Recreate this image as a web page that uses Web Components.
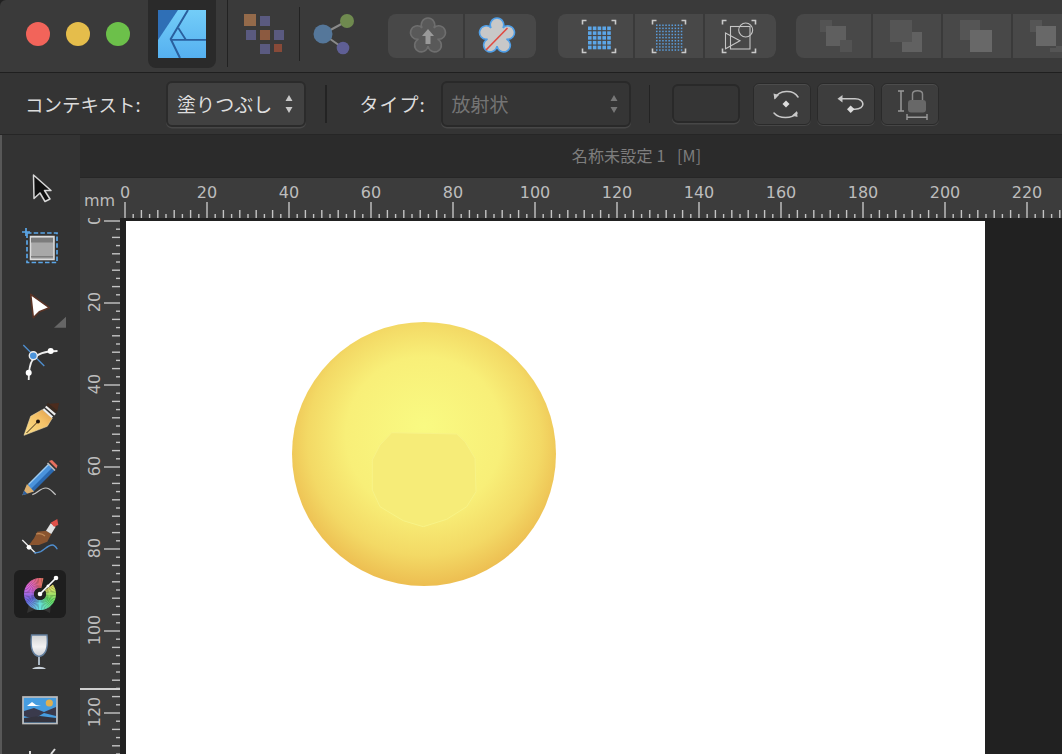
<!DOCTYPE html>
<html lang="ja">
<head>
<meta charset="utf-8">
<title>Affinity</title>
<style>
  html, body { margin: 0; padding: 0; background: #212121; overflow: hidden; }
  body { font-family: "Noto Sans CJK JP", "Liberation Sans", sans-serif; }
</style>
</head>
<body>
<app-window></app-window>
<script>
// every icon uses page coordinates in its viewBox, so it is easy to compare with the screenshot
const svg = (x, y, w, h, body) =>
  `<svg width="${w}" height="${h}" viewBox="${x} ${y} ${w} ${h}" style="display:block;overflow:visible">${body}</svg>`;

function flowerPath(cx, cy, valley, lobe) {
  let d = "";
  for (let i = 0; i <= 5; i++) {
    const a = ((i * 72 - 54) * Math.PI) / 180;
    const px = cx + valley * Math.cos(a);
    const py = cy + valley * Math.sin(a);
    d += `${i ? "A" + lobe + " " + lobe + " 0 1 1 " : "M"}${px.toFixed(1)} ${py.toFixed(1)} `;
  }
  return d + "Z";
}

function corners(x1, y1, x2, y2) {
  const s = 4;
  return `<path fill="none" stroke="#c9c9c9" stroke-width="1.6" d="
    M${x1} ${y1 + s}V${y1}H${x1 + s} M${x2 - s} ${y1}H${x2}V${y1 + s}
    M${x2} ${y2 - s}V${y2}H${x2 - s} M${x1 + s} ${y2}H${x1}V${y2 - s}"/>`;
}

function dots(x, y, n, step, size, fill) {
  let out = "";
  for (let r = 0; r < n; r++)
    for (let c = 0; c < n; c++)
      out += `<rect x="${(x + c * step).toFixed(1)}" y="${(y + r * step).toFixed(1)}" width="${size}" height="${size}" fill="${fill}"/>`;
  return out;
}

function wheelSegments(cx, cy, ro, ri) {
  let out = "";
  for (let a = 54; a < 372; a += 6) {
    const p = (deg, r) => {
      const t = ((deg - 90) * Math.PI) / 180;
      return `${(cx + r * Math.cos(t)).toFixed(2)} ${(cy + r * Math.sin(t)).toFixed(2)}`;
    };
    out += `<path d="M${p(a, ri)}L${p(a, ro)}L${p(a + 6.4, ro)}L${p(a + 6.4, ri)}Z" fill="hsl(${(a + 2) % 360},66%,64%)"/>`;
  }
  return out;
}

const appIcon = `<svg width="48" height="48" viewBox="0 0 48 48" style="display:block">
  <defs><linearGradient id="ai" x1="0" y1="0" x2="0" y2="1"><stop offset="0" stop-color="#73cdf8"/><stop offset="1" stop-color="#55b0f0"/></linearGradient></defs>
  <rect width="48" height="48" fill="url(#ai)"/>
  <path d="M0 0H20L0 30Z" fill="#2f6fb6"/>
  <path d="M30 0L12.700 29L22 48" fill="none" stroke="#2a5f9e" stroke-width="2"/>
  <path d="M12.700 29.800H48M20.300 18L28 30" fill="none" stroke="#2a5f9e" stroke-width="1.800"/>
</svg>`;

const personaIcon = svg(244, 14, 41, 41, `
  <rect x="244" y="14" width="12" height="12" fill="#946a4a"/>
  <rect x="260" y="16" width="10" height="10" fill="#5a5a80"/>
  <rect x="246" y="30" width="10" height="10" fill="#5a5a80"/>
  <rect x="260" y="30" width="10" height="10" fill="#8c5a40"/>
  <rect x="274" y="30" width="10" height="10" fill="#5a5a80"/>
  <rect x="260" y="44" width="10" height="10" fill="#5a5a80"/>
  <rect x="274" y="44" width="8" height="8" fill="#884a38"/>`);

const shareIcon = svg(313, 14, 42, 41, `
  <path d="M323 34L347 21M323 34L343 48" stroke="#8a8a8a" stroke-width="2"/>
  <circle cx="323" cy="34" r="9.500" fill="#55779a"/>
  <circle cx="347" cy="21" r="7" fill="#6f8a4f"/>
  <circle cx="343" cy="48" r="6.300" fill="#5f5f95"/>`);

const groupIcons = [
  [
    [75, svg(388, 14, 75, 44, `
      <path d="${flowerPath(428, 36, 10, 6.7)}" fill="#595959" stroke="#6e6e6e" stroke-width="1.6"/>
      <path d="M428 29L434 36H430.500V44H425.500V36H422Z" fill="#9a9a9a"/>`)],
    [71, svg(465, 14, 71, 44, `
      <path d="${flowerPath(497, 36, 10, 6.7)}" fill="#c8c8c8" stroke="#4f9fe8" stroke-width="1.6"/>
      <path d="M486 50L507.500 28" stroke="#e04a42" stroke-width="1.6"/>`)],
  ],
  [
    [75, svg(558, 14, 75, 44, corners(582.5, 20.5, 615.5, 52.5) + dots(588, 26.5, 5, 4.8, 3.6, "#5ba6e8"))],
    [68, svg(635, 14, 68, 44, corners(652.5, 20.5, 685.5, 52.5) + dots(656, 24.5, 9, 3.1, 1.5, "#5a9ddc"))],
    [71, svg(705, 14, 71, 44, corners(722.5, 20.5, 755.5, 52.5) + `
      <g fill="none" stroke="#c4c4c4" stroke-width="1.1">
        <rect x="730.500" y="26.500" width="19.500" height="22.500"/>
        <circle cx="745.700" cy="30" r="7"/>
        <path d="M725.500 33L740 40.700L725.500 48.700Z"/>
      </g>`)],
  ],
  [
    [75, svg(796, 14, 75, 44, `
      <rect x="820" y="20" width="12" height="12" fill="#535353"/>
      <rect x="826" y="26" width="20" height="20" fill="#5f5f5f"/>
      <rect x="840" y="40" width="12" height="12" fill="#535353"/>`)],
    [68, svg(873, 14, 68, 44, `
      <rect x="890" y="20" width="22" height="22" fill="#555"/>
      <path d="M912 32H922V52H902V42H912Z" fill="#616161"/>`)],
    [68, svg(943, 14, 68, 44, `
      <path d="M960 20H980V30H970V40H960Z" fill="#555"/>
      <rect x="970" y="30" width="22" height="22" fill="#686868"/>`)],
    [75, svg(1013, 14, 75, 44, `
      <path d="M1030 20H1042V26H1036V32H1030Z" fill="#555"/>
      <rect x="1036" y="26" width="20" height="20" fill="#686868"/>
      <path d="M1050 52V48H1056V46H1062V52Z" fill="#555"/>`)],
  ],
];

const ctxIcons = {
  reset: svg(753, 84, 58, 40, `
    <g fill="none" stroke="#c8c8c8" stroke-width="1.5" stroke-linecap="round">
      <path d="M775 98C779 90 793 89 798 97"/>
      <path d="M774 113C779 119 792 119 797 113"/>
    </g>
    <path d="M773.500 93.500L779 95L774.500 99.500Z M797.500 117L792 115.500L797 111Z" fill="#c8c8c8"/>
    <path d="M786 100.500L789.500 104L786 107.500L782.500 104Z" fill="#dcdcdc"/>`),
  loop: svg(817, 84, 58, 40, `
    <path d="M841 98.700H855C865.500 98.700 865.500 109.300 855 109.300H851" fill="none" stroke="#c8c8c8" stroke-width="1.6"/>
    <path d="M837.500 98.700L842.500 95V102.500Z" fill="#c8c8c8"/>
    <path d="M850.700 105.500L854.500 109.300L850.700 113L847 109.300Z" fill="#dcdcdc"/>`),
  lock: svg(881, 84, 58, 40, `
    <path d="M898 91H904M898 111H904M901 91V111" fill="none" stroke="#9a9a9a" stroke-width="1.5"/>
    <path d="M912.500 101V94C912.500 89.500 922.500 89.500 922.500 94V101" fill="none" stroke="#8a8a8a" stroke-width="1.5"/>
    <rect x="908" y="100" width="18" height="12.500" rx="3" fill="#686868"/>
    <path d="M907 114V120M927 114V120M907 117.300H927" fill="none" stroke="#9a9a9a" stroke-width="1.4"/>`),
};

const railIcons = [
  svg(0, 159, 80, 58, `
    <path d="M33.500 175L51 190.500H44.500L50 199L45 201.500L40 193L34 198.500Z" fill="#111" stroke="#d8d8d8" stroke-width="1.5" stroke-linejoin="round"/>`),
  svg(0, 217, 80, 58, `
    <rect x="27" y="233" width="30" height="29.500" fill="none" stroke="#5ba6e8" stroke-width="1.7" stroke-dasharray="4.500 2.200"/>
    <path d="M26 228V236M22 232H30" stroke="#5ba6e8" stroke-width="1.7"/>
    <rect x="30.500" y="236.500" width="23.500" height="23" fill="#a8a8a8" stroke="#dcdcdc" stroke-width="1.500"/>
    <rect x="31" y="238" width="22" height="4.500" fill="#7c7c7c"/>
    <rect x="31" y="256" width="22" height="1.500" fill="#7c7c7c"/>`),
  svg(0, 275, 80, 58, `
    <path d="M30.700 294.300L49.300 307.700L39.300 311.700L33.300 317.700Z" fill="#fff" stroke="#5a3325" stroke-width="1.600" stroke-linejoin="round"/>
    <path d="M66 316.700V327.700H54Z" fill="#666"/>`),
  svg(0, 333, 80, 58, `
    <path d="M23.300 345L44.300 366" stroke="#4f8fd0" stroke-width="1.300"/>
    <path d="M28.700 380C28.700 364 30 351 57.500 351" fill="none" stroke="#eee" stroke-width="1.800"/>
    <circle cx="33.300" cy="355.700" r="4" fill="#4b94dc" stroke="#eee" stroke-width="1.400"/>
    <circle cx="50.700" cy="351" r="3" fill="#fff"/>
    <circle cx="28.700" cy="372.700" r="3" fill="#fff"/>`),
  svg(0, 391, 80, 58, `
    <defs><linearGradient id="nib" x1="0" y1="1" x2="1" y2="0"><stop offset="0" stop-color="#fbe08a"/><stop offset=".6" stop-color="#f5c268"/><stop offset="1" stop-color="#dd9a48"/></linearGradient></defs>
    <path d="M24 435.300L30.700 416.300L42.300 409.700L52.300 418L47.300 426.300Z" fill="url(#nib)" stroke="#f3dca8" stroke-width=".6"/>
    <path d="M26.500 433L38 421.500" stroke="#3c2a18" stroke-width="1"/>
    <circle cx="38" cy="421.500" r="2" fill="#221610"/>
    <path d="M47.300 404L59 403L57.300 411.300Z" fill="#4c2c1e"/>
    <path d="M47 404L56.500 412" stroke="#3a2a20" stroke-width="3"/>
    <path d="M43.300 409L52.300 417.300" stroke="#eee" stroke-width="2.200"/>
    <path d="M45.700 406.500L55.200 414.700" stroke="#eee" stroke-width="2.200"/>`),
  svg(0, 449, 80, 58, `
    <path d="M30 489L52 467" stroke="#2b69b0" stroke-width="8.500"/>
    <path d="M29 487.500L50.500 466" stroke="#4a93dc" stroke-width="5"/>
    <path d="M28.500 484.500L49 464" stroke="#9ccbf2" stroke-width="1.500"/>
    <path d="M22.300 495.300L27 484L34 491.500Z" fill="#dcb070"/>
    <path d="M22.300 495.300L24 490.500L27.500 494Z" fill="#2d5f9e"/>
    <path d="M49 461L52 460L57.500 465.500L56.500 468.500Z" fill="#e8705e"/>
    <path d="M47.500 463L55 470.500" stroke="#bbb" stroke-width="1.600"/>
    <path d="M32.300 494.700C37 494 40 488 45.700 488C50 488 52 491.500 55.700 494.700" fill="none" stroke="#c8c8c8" stroke-width="1.200"/>`),
  svg(0, 507, 80, 58, `
    <path d="M46 530.700L51.300 534L47.300 541.700L39 545L29 545L34 538.300L37.300 531.700Z" fill="#8a5530"/>
    <path d="M36 534C40 533 43 534 45 536" stroke="#c08a58" stroke-width="1.200" fill="none"/>
    <path d="M50.700 523.300L55.700 526.700L51.300 534L46 530.700Z" fill="#e2e2e2"/>
    <path d="M57.300 519L58.300 525L54 526.700L50.700 522.700Z" fill="#e0514a"/>
    <path d="M22.300 540L35.700 553.300" stroke="#eee" stroke-width="1.300"/>
    <circle cx="29" cy="547.300" r="2.400" fill="#fff"/>
    <path d="M34 552.700C37 553 39 552.500 40.700 551.700C45 549.500 48 545 52.300 545C54.500 545 56 547 57.300 549.300" fill="none" stroke="#4f8fd0" stroke-width="1.300"/>`),
  svg(0, 565, 80, 58, `
    <rect x="14" y="570" width="52" height="48" rx="6" fill="#1e1e1e"/>
    <path d="M27 613L29 604H51L50 613L44 610H34Z" fill="#333"/>
    ${wheelSegments(40, 594, 16, 6)}
    <circle cx="40" cy="594" r="6" fill="#222"/>
    <path d="M40 594L56 578" stroke="#fff" stroke-width="1.700"/>
    <circle cx="40" cy="594" r="2.300" fill="#fff"/>
    <circle cx="48" cy="586" r="1.500" fill="#fff"/>
    <circle cx="56" cy="578" r="2.300" fill="#fff"/>`),
  svg(0, 623, 80, 58, `
    <defs><linearGradient id="wine" x1="0" y1="0" x2="0" y2="1"><stop offset="0" stop-color="#d0d2d4"/><stop offset=".55" stop-color="#f2f2f2"/><stop offset="1" stop-color="#c8ccd2"/></linearGradient></defs>
    <path d="M31.500 635H47C48 644 47.500 655 39 656.500C31 655 30.500 644 31.500 635Z" fill="url(#wine)" stroke="#64809f" stroke-width="1.400"/>
    <path d="M39 657V665" stroke="#a8b4c0" stroke-width="2"/>
    <path d="M32 669C35 666 43 666 46 669Z" fill="#c8d0d8"/>`),
  svg(0, 681, 80, 58, `
    <rect x="23" y="697" width="34" height="26.500" fill="#469de0" stroke="#bdbdbd" stroke-width="1.700"/>
    <path d="M27 706L32 702L36 705L41 706Z" fill="#fff"/>
    <circle cx="49.300" cy="703" r="3.600" fill="#e0b050"/>
    <path d="M24 711L34 708L44 712L56 707V716L44 713L34 719L24 716Z" fill="#3a3a4c"/>
    <path d="M24 718L40 716L56 718V722.500H24Z" fill="#34343f"/>`),
  svg(0, 739, 80, 58, `
    <path d="M30 751V754M55 749L51 754" stroke="#ddd" stroke-width="2"/>`),
];

class TrafficLights extends HTMLElement {
  constructor() {
    super();
    this.attachShadow({ mode: "open" }).innerHTML = `
      <style>
        :host { display: flex; gap: 16px; margin-bottom: 4px; }
        i { width: 24px; height: 24px; border-radius: 50%; }
      </style>
      <i style="background:#f2645a"></i>
      <i style="background:#e5bd4b"></i>
      <i style="background:#6cc04a"></i>`;
  }
}

class ToolGroup extends HTMLElement {
  set buttons(list) {
    this.attachShadow({ mode: "open" }).innerHTML = `
      <style>
        :host { display: flex; gap: 2px; height: 44px; border-radius: 8px; overflow: hidden; flex: none; }
        div { background: #484848; height: 44px; flex: none; }
        div:first-child { border-radius: 8px 0 0 8px; }
        div:last-child { border-radius: 0 8px 8px 0; }
      </style>
      ${list.map(([w, icon]) => `<div style="width:${w}px">${icon}</div>`).join("")}`;
  }
}

class MainToolbar extends HTMLElement {
  constructor() {
    super();
    this.attachShadow({ mode: "open" }).innerHTML = `
      <style>
        :host {
          display: flex; align-items: center; height: 72px; flex: none; overflow: hidden;
          background: #3a3a3a; border-bottom: 1px solid #1f1f1f; padding-left: 26px;
          border-top-left-radius: 6px;
        }
        .tile {
          width: 48px; height: 48px; padding: 10px; margin-left: 18px; align-self: flex-start;
          background: #2a2a2a; border-radius: 0 0 8px 8px; flex: none;
        }
        .rule { flex: none; width: 1.5px; background: #222; }
        .r1 { height: 67px; margin: 0 0 5px 10.5px; }
        .r2 { height: 54px; margin: 0 0 5px 13.5px; }
        .persona { flex: none; margin: 0 0 3px 16px; }
        .share { flex: none; margin: 0 0 3px 13px; }
        .g1 { margin-left: 33px; }
        .g2 { margin-left: 22px; }
        .g3 { margin-left: 20px; }
      </style>
      <traffic-lights></traffic-lights>
      <div class="tile">${appIcon}</div>
      <div class="rule r1"></div>
      <div class="persona">${personaIcon}</div>
      <div class="rule r2"></div>
      <div class="share">${shareIcon}</div>
      <tool-group class="g1"></tool-group>
      <tool-group class="g2"></tool-group>
      <tool-group class="g3"></tool-group>`;
    this.shadowRoot.querySelectorAll("tool-group").forEach((g, i) => (g.buttons = groupIcons[i]));
  }
}

class SelectBox extends HTMLElement {
  constructor() {
    super();
    const off = this.hasAttribute("disabled");
    this.attachShadow({ mode: "open" }).innerHTML = `
      <style>
        :host {
          display: flex; align-items: center; justify-content: space-between; flex: none;
          box-sizing: border-box; height: 46px; padding: 0 9px 0 9px;
          border: 2px solid ${off ? "#292929" : "#2b2b2b"}; border-radius: 6px;
          background: ${off ? "#353535" : "#414141"};
          box-shadow: 0 1.5px 0 #474747;
          color: ${off ? "#747474" : "#dedede"}; font-size: 19px; white-space: nowrap;
        }
        svg { display: block; flex: none; }
      </style>
      <slot></slot>
      <svg width="12" height="24" viewBox="0 0 12 24">
        <path d="M6 3L9.500 9H2.500Z M6 21L9.500 15H2.500Z" fill="${off ? "#777" : "#c8c8c8"}"/>
      </svg>`;
  }
}

class CtxButton extends HTMLElement {
  constructor() {
    super();
    const icon = ctxIcons[this.getAttribute("icon")] || "";
    this.attachShadow({ mode: "open" }).innerHTML = `
      <style>
        :host {
          display: block; flex: none; box-sizing: border-box; width: 58px; height: 42px;
          border: 1.5px solid #2a2a2a; border-radius: 6px; background: #3d3d3d;
          box-shadow: inset 0 1px 0 #4c4c4c, 0 1px 0 #464646; overflow: hidden;
        }
        div { margin-left: -1.5px; }
      </style>
      <div>${icon}</div>`;
  }
}

class ContextBar extends HTMLElement {
  constructor() {
    super();
    this.attachShadow({ mode: "open" }).innerHTML = `
      <style>
        :host {
          display: flex; align-items: center; height: 62px; flex: none; box-sizing: border-box;
          padding: 0 0 0 25px; background: #343434; border-bottom: 1px solid #262626;
          color: #dcdcdc; font-size: 18.5px; white-space: nowrap;
        }
        .rule { flex: none; width: 1.5px; height: 38px; background: #232323; }
        .label2 { font-size: 19px; letter-spacing: 1px; }
        .blank {
          flex: none; box-sizing: border-box; width: 68px; height: 39px; margin-left: 22px;
          border: 2px solid #292929; border-radius: 6px; background: #353535; box-shadow: 0 1.5px 0 #474747;
        }
      </style>
      <span style="width:141px;flex:none">コンテキスト:</span>
      <select-box style="width:140px">塗りつぶし</select-box>
      <div class="rule" style="margin-left:19px"></div>
      <span class="label2" style="margin-left:33px;width:81px;flex:none">タイプ:</span>
      <select-box disabled style="width:190px">放射状</select-box>
      <div class="rule" style="margin-left:18px"></div>
      <div class="blank"></div>
      <ctx-button icon="reset" style="margin-left:13px"></ctx-button>
      <ctx-button icon="loop" style="margin-left:6px"></ctx-button>
      <ctx-button icon="lock" style="margin-left:6px"></ctx-button>`;
  }
}

class ToolRail extends HTMLElement {
  constructor() {
    super();
    this.attachShadow({ mode: "open" }).innerHTML = `
      <style>
        :host {
          display: flex; flex-direction: column; flex: none; width: 80px; box-sizing: border-box;
          padding-top: 24px; background: #333; border-left: 2px solid #585858; overflow: hidden;
        }
        div { height: 58px; flex: none; margin-left: -2px; }
      </style>
      ${railIcons.map((i) => `<div>${i}</div>`).join("")}`;
  }
}

class DocTab extends HTMLElement {
  constructor() {
    super();
    this.attachShadow({ mode: "open" }).innerHTML = `
      <style>
        :host {
          display: flex; align-items: center; justify-content: center; height: 43px; flex: none;
          box-sizing: border-box; padding: 0 0 2px 131px; background: #2b2b2b;
          border-bottom: 1px solid #262626; color: #7e7e7e; font-size: 16px; letter-spacing: .2px; white-space: pre;
        }
      </style>
      <slot></slot>`;
  }
}

const rulerFont = `font-family="DejaVu Sans" font-size="16" fill="#bdbdbd"`;

class RulerTop extends HTMLElement {
  constructor() {
    super();
    let ticks = "";
    let labels = "";
    for (let i = 0; i <= 230; i += 2) {
      const x = 45 + i * 4.1;
      const top = i % 20 === 0 ? 24 : i % 4 === 0 ? 32 : 36;
      ticks += `<rect x="${(x - 0.7).toFixed(1)}" y="${top}" width="1.4" height="${40 - top}"/>`;
      if (i % 20 === 0) labels += `<text x="${x.toFixed(1)}" y="19.500" text-anchor="middle">${i}</text>`;
    }
    this.attachShadow({ mode: "open" }).innerHTML = `
      <style>
        :host { display: block; height: 40px; flex: none; background: #3c3c3c; overflow: hidden; }
        svg { display: block; }
      </style>
      <svg width="982" height="40" viewBox="0 0 982 40">
        <g fill="#c4c4c4">${ticks}</g>
        <g ${rulerFont}>${labels}<text x="4" y="27.500">mm</text></g>
      </svg>`;
  }
}

class RulerLeft extends HTMLElement {
  constructor() {
    super();
    let ticks = "";
    let labels = "";
    for (let i = 0; i <= 130; i += 2) {
      const y = 3 + i * 4.1;
      const left = i % 20 === 0 ? 24 : i % 4 === 0 ? 32 : 36;
      ticks += `<rect x="${left}" y="${(y - 0.7).toFixed(1)}" width="${40 - left}" height="1.4"/>`;
      // the first label is cut by the top of the ruler, as in the app
      if (i % 20 === 0) labels += `<text transform="translate(20 ${(y - 1).toFixed(1)}) rotate(-90)" text-anchor="middle">${i}</text>`;
    }
    this.attachShadow({ mode: "open" }).innerHTML = `
      <style>
        :host { display: block; width: 40px; flex: none; background: #3c3c3c; overflow: hidden; }
        svg { display: block; }
      </style>
      <svg width="40" height="536" viewBox="0 0 40 536">
        <g fill="#c4c4c4">${ticks}</g>
        <g ${rulerFont}>${labels}</g>
        <rect x="0" y="470" width="40" height="2" fill="#d0d0d0"/>
      </svg>`;
  }
}

class PageCanvas extends HTMLElement {
  constructor() {
    super();
    this.attachShadow({ mode: "open" }).innerHTML = `
      <style>
        :host { display: flex; flex: 1; min-width: 0; background: #212121; padding: 3px 0 0 6px; overflow: hidden; }
        .page { width: 859px; flex: none; background: #fff; box-sizing: border-box; padding: 101px 0 0 166px; }
      </style>
      <div class="page"><slot></slot></div>`;
  }
}

class SunArt extends HTMLElement {
  constructor() {
    super();
    this.attachShadow({ mode: "open" }).innerHTML = `
      <style>:host { display: block; width: 264px; height: 264px; } svg { display: block; }</style>
      <svg width="264" height="264" viewBox="292 322 264 264">
        <defs>
          <radialGradient id="sun" gradientUnits="userSpaceOnUse" cx="424" cy="442" r="142" fx="424" fy="426">
            <stop offset="0" stop-color="#f9fa82"/>
            <stop offset=".55" stop-color="#f8ef78"/>
            <stop offset=".82" stop-color="#f3d965"/>
            <stop offset="1" stop-color="#edbf52"/>
          </radialGradient>
        </defs>
        <circle cx="424" cy="454" r="132" fill="url(#sun)"/>
        <path d="M391.700 432.700L456.700 434L465 441.700L475 458.300L476 491.700L466.700 506.700L446.700 519.300L423.300 526.700L403.300 520.700L380 506.700L372.300 490L372.300 460L380 445Z"
          fill="#f6ec78" stroke="#f8f387" stroke-width="1"/>
      </svg>`;
  }
}

class AppWindow extends HTMLElement {
  constructor() {
    super();
    this.attachShadow({ mode: "open" }).innerHTML = `
      <style>
        :host {
          display: flex; flex-direction: column; width: 1062px; height: 754px; overflow: hidden;
          background: #212121; font-family: "Noto Sans CJK JP", "Liberation Sans", sans-serif;
        }
        .work { display: flex; flex: 1; min-height: 0; }
        .doc { display: flex; flex-direction: column; flex: 1; min-width: 0; }
        .view { display: flex; flex: 1; min-height: 0; }
      </style>
      <main-toolbar></main-toolbar>
      <context-bar></context-bar>
      <div class="work">
        <tool-rail></tool-rail>
        <div class="doc">
          <doc-tab>名称未設定 1   [M]</doc-tab>
          <ruler-top></ruler-top>
          <div class="view">
            <ruler-left></ruler-left>
            <page-canvas><sun-art></sun-art></page-canvas>
          </div>
        </div>
      </div>`;
  }
}

customElements.define("traffic-lights", TrafficLights);
customElements.define("tool-group", ToolGroup);
customElements.define("main-toolbar", MainToolbar);
customElements.define("select-box", SelectBox);
customElements.define("ctx-button", CtxButton);
customElements.define("context-bar", ContextBar);
customElements.define("tool-rail", ToolRail);
customElements.define("doc-tab", DocTab);
customElements.define("ruler-top", RulerTop);
customElements.define("ruler-left", RulerLeft);
customElements.define("page-canvas", PageCanvas);
customElements.define("sun-art", SunArt);
customElements.define("app-window", AppWindow);
</script>
</body>
</html>
